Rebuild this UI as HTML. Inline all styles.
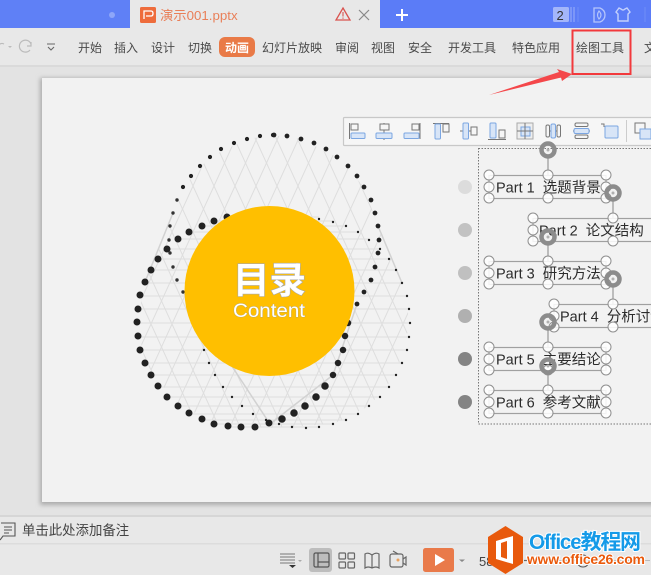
<!DOCTYPE html>
<html><head><meta charset="utf-8"><style>
html,body{margin:0;padding:0;background:#e8e8e8}
body{width:651px;height:575px;overflow:hidden;position:relative;font-family:"Liberation Sans","Noto Sans CJK SC",sans-serif}
svg{position:absolute;left:0;top:0}
text{font-family:"Liberation Sans","Noto Sans CJK SC",sans-serif}
.m{font-size:12px;fill:#4a4a4a}
.p{font-size:14.5px;fill:#2c2c2c}
</style></head><body>
<svg width="651" height="575" viewBox="0 0 651 575">
<defs>
<pattern id="h" patternUnits="userSpaceOnUse" width="21" height="46" x="4" y="2">
<path d="M0 0L21 46M21 0L0 46" stroke="#dedede" stroke-width="1" fill="none"/>
</pattern>
<filter id="b"><feGaussianBlur stdDeviation="2.5"/></filter>
</defs>
<!-- backgrounds -->
<rect width="651" height="575" fill="#e8e8e8"/>
<rect y="66" width="651" height="450" fill="#e3e3e3"/>
<rect y="65" width="651" height="2" fill="#dadada"/>
<rect x="40" y="78" width="640" height="427" fill="#aaa" filter="url(#b)"/>
<rect x="42" y="78" width="620" height="424" fill="#f2f2f2"/>
<rect y="515" width="651" height="2" fill="#d6d6d6"/>
<rect y="517" width="651" height="58" fill="#e8e8e8"/>
<rect y="543" width="651" height="1.5" fill="#dcdcdc"/>
<!-- tab bar -->
<rect width="130" height="28" fill="#5f80f6"/>
<rect x="380" width="271" height="28" fill="#5b7cf7"/>
<circle cx="112" cy="15" r="3" fill="#8ea6f8"/>
<rect x="140" y="7" width="16" height="16" rx="1.5" fill="#ee6c3c"/>
<path d="M144 19V11H151Q153 11 153 13.5Q153 16 151 16H146" stroke="#fff" stroke-width="1.3" fill="none"/>
<text x="160" y="20" font-size="13.3" fill="#e97f58">演示001.pptx</text>
<path d="M343 8L350 20H336Z" fill="none" stroke="#d9534f" stroke-width="1.3"/>
<path d="M343 12V16.5M343 17.5V18.8" stroke="#d9534f" stroke-width="1.1"/>
<path d="M359 10L369 20M369 10L359 20" stroke="#888" stroke-width="1.2"/>
<path d="M402 9V21M396 15H408" stroke="#fff" stroke-width="2"/>
<rect x="553" y="7" width="16" height="15" rx="1.5" fill="#a3b6fa"/>
<text x="556.5" y="20" font-size="13" fill="#333">2</text>
<path d="M571 7V22M574 7V22" stroke="#93a9f9" stroke-width="1.2"/>
<path d="M578 7V22M645 7V22" stroke="#6f8ef7" stroke-width="1"/>
<path d="M594 8H600Q605 10 605 15Q605 20 600 22H594Z" fill="none" stroke="#b6c6fb" stroke-width="1.3"/>
<path d="M599 11Q603 15 599 19Q596 15 599 11Z" fill="none" stroke="#b6c6fb" stroke-width="1.1"/>
<path d="M619 8L621 9Q623 11 625 9L627 8L630 12L628 14V21H618V14L616 12Z" fill="none" stroke="#c4d1fc" stroke-width="1.4"/>
<!-- menu -->
<path d="M-2 47Q0 42 4 44" stroke="#bbb" fill="none" stroke-width="1.2"/>
<path d="M8 46H12L10 48Z" fill="#bbb"/>
<path d="M31 44A6 6 0 1 0 30 50M31 42V46H27" stroke="#bbb" fill="none" stroke-width="1.2"/>
<path d="M47 44H55M48 47L51 50L54 47" stroke="#666" fill="none" stroke-width="1.1"/>
<text class="m" x="78" y="52">开始</text>
<text class="m" x="114" y="52">插入</text>
<text class="m" x="151" y="52">设计</text>
<text class="m" x="188" y="52">切换</text>
<rect x="219" y="37" width="36" height="20" rx="6" fill="#e97a47"/>
<text class="m" x="225" y="52" style="fill:#fff;font-weight:700">动画</text>
<text class="m" x="262" y="52">幻灯片放映</text>
<text class="m" x="335" y="52">审阅</text>
<text class="m" x="371" y="52">视图</text>
<text class="m" x="408" y="52">安全</text>
<text class="m" x="448" y="52">开发工具</text>
<text class="m" x="512" y="52">特色应用</text>
<text class="m" x="576" y="52">绘图工具</text>
<text class="m" x="644" y="52">文</text>
<rect x="572.5" y="30.5" width="58" height="43.5" fill="none" stroke="#f2393c" stroke-width="2"/>
<path d="M489 95L559 72L557 69L572 74L562 81L561 77.5Z" fill="#f4474a"/>
<!-- mesh -->
<path fill="url(#h)" d="M273 135L301 139L337 157L364 187L378 226L402 283L410 323L396 375L369 406L333 424L270 428L228 426L178 406L145 363L137 322L145 282L173 213L183 187L210 157L247 139Z"/>
<path stroke="#dedede" stroke-width="1" fill="none" d="M227 217H319M214 221H333M202 226H346M189 232H358M178 239H369M167 249H380M158 259H389M151 270H396M145 283H402M140 296H407M138 309H409M137 323H410M138 337H409M140 350H407M145 363H402M151 375H396M158 387H389M167 397H380M178 406H369M189 414H358M202 420H346M214 424H333M228 427H319"/>
<path stroke="#d2d2d2" stroke-width="1.5" fill="none" d="M173 213L145 282M378 226L402 283M183 292L270 424M357 304L333 375L270 424"/>
<!-- dots -->
<g fill="none" stroke="#222" stroke-linecap="round">
<path stroke-width="4.2" d="M273 135h0M260 136h0M247 139h0M234 143h0M221 149h0M210 157h0M200 166h0M191 176h0M183 187h0"/>
<path stroke-width="3.4" stroke="#333" d="M177 200h0M173 213h0M170 226h0M169 240h0M170 253h0M173 267h0M177 280h0M183 292h0"/>
<path stroke-width="4.8" d="M274 135h0M287 136h0M301 139h0M314 143h0M326 149h0M337 157h0M348 166h0M357 176h0M364 187h0M371 200h0M375 213h0M378 226h0M379 240h0M378 253h0M375 267h0M371 280h0M364 292h0M357 304h0"/>
<path stroke-width="7" d="M227 217h0M214 221h0M202 226h0M189 232h0M178 239h0M167 249h0M158 259h0M151 270h0M145 282h0M140 295h0M138 309h0M137 322h0M138 336h0M140 350h0M145 363h0M151 375h0M158 386h0M167 397h0M178 406h0M189 413h0M202 419h0M214 424h0M228 426h0M241 427h0M255 427h0M269 423h0"/>
<path stroke-width="6.5" d="M348 323h0M345 336h0M343 350h0M338 363h0M333 375h0"/>
<path stroke-width="7.5" d="M325 386h0M316 397h0M305 406h0M294 413h0M282 419h0"/>
<path stroke-width="2.4" d="M319 219h0M333 222h0M346 226h0M358 232h0M369 240h0M380 249h0M389 259h0M396 270h0M402 283h0M407 296h0M409 309h0M410 323h0M409 337h0M407 350h0M402 363h0M396 375h0M389 387h0M380 397h0M369 406h0M358 414h0M346 420h0M333 424h0M319 427h0M306 428h0M292 427h0M279 424h0M204 350h0M209 363h0M215 375h0M223 387h0M232 397h0M242 406h0M253 414h0M266 420h0"/>
</g>
<!-- circle -->
<circle cx="269.5" cy="291" r="85" fill="#ffbf00"/>
<text x="233" y="293" font-size="36.5" font-weight="700" fill="#fff" stroke="#a8a8a8" stroke-width="1.2" paint-order="stroke">目录</text>
<text x="233" y="317" font-size="19.5" fill="#fff" stroke="#b0a070" stroke-width=".7" paint-order="stroke" textLength="72" lengthAdjust="spacingAndGlyphs">Content</text>
<!-- floating toolbar -->
<rect x="343.5" y="117.5" width="320" height="28" rx="1" fill="#f6f6f6" stroke="#c8c8c8" stroke-width="1.2"/>
<g fill="#f6f6f6" stroke="#777" stroke-width="1">
<path d="M349.5 123V139M384 123V140M420 123V139M433 123.5H449M460 131H477M488 139.5H506M546 131H561M573 131H590" fill="none"/>
<rect x="351" y="124" width="7" height="6"/><rect x="380" y="124" width="9" height="6"/><rect x="412" y="124" width="7" height="6"/>
<rect x="443" y="124" width="6" height="8"/><rect x="471" y="127" width="6" height="8"/><rect x="499" y="130" width="6" height="8"/>
<rect x="517" y="123" width="16" height="16" fill="#eee" stroke="#aaa"/>
<rect x="546" y="125" width="3.5" height="12" rx="1.5"/><rect x="557" y="125" width="3.5" height="12" rx="1.5"/>
<rect x="575" y="123" width="13" height="3.5" rx="1.5"/><rect x="575" y="135" width="13" height="3.5" rx="1.5"/>
<rect x="635" y="123" width="10" height="10" fill="none"/>
<path d="M626.5 120V142" stroke="#ccc" fill="none"/>
</g>
<g fill="#d8e5f7" stroke="#7ba6e2" stroke-width="1">
<rect x="351" y="133" width="14" height="5.5" rx="1"/><rect x="376" y="133" width="16" height="5.5" rx="1"/><rect x="404" y="133" width="15" height="5.5" rx="1"/>
<rect x="435" y="124" width="5.5" height="15" rx="1"/><rect x="463" y="123" width="5.5" height="16" rx="1"/><rect x="490" y="123" width="6" height="15" rx="1"/>
<rect x="521" y="127" width="9" height="9"/><rect x="551" y="124" width="4.5" height="14" rx="1.5"/><rect x="574" y="128.5" width="15" height="5" rx="1.5"/>
<rect x="605" y="126" width="13" height="12" rx="1"/><rect x="640" y="129" width="11" height="10"/>
</g>
<path d="M517 131H533M525 123V139" stroke="#777" stroke-width="1"/>
<path d="M601 124H604V127" stroke="#777" fill="none"/>
<!-- row markers -->
<circle cx="465" cy="187" r="7" fill="#dcdcdc"/><circle cx="465" cy="230" r="7" fill="#c2c2c2"/><circle cx="465" cy="273" r="7" fill="#c0c0c0"/><circle cx="465" cy="316" r="7" fill="#b0b0b0"/><circle cx="465" cy="359" r="7" fill="#848484"/><circle cx="465" cy="402" r="7" fill="#848484"/>
<!-- selection -->
<rect x="478.5" y="148.5" width="190" height="275.5" fill="none" stroke="#777" stroke-width="1" stroke-dasharray="1.5 1.5"/>
<path d="M548 158V175M613 201V218M548 244V261M613 287V304M548 330V347M548 373V390" stroke="#999" stroke-width="1.2"/>
<g fill="#f2f2f2" stroke="#a0a0a0" stroke-width="1.2">
<rect x="489" y="175.5" width="117" height="23"/><rect x="533" y="218.5" width="160" height="23"/><rect x="489" y="261.5" width="117" height="23"/><rect x="554" y="304.5" width="118" height="23"/><rect x="489" y="347.5" width="117" height="23"/><rect x="489" y="390.5" width="117" height="23"/>
</g>
<g fill="#2c2c2c">
<text class="p" x="496" y="192.5">Part 1&#160;&#160;选题背景</text>
<text class="p" x="539" y="235.5">Part 2&#160;&#160;论文结构</text>
<text class="p" x="496" y="278.5">Part 3&#160;&#160;研究方法</text>
<text class="p" x="560" y="321.5">Part 4&#160;&#160;分析讨论</text>
<text class="p" x="496" y="364.5">Part 5&#160;&#160;主要结论</text>
<text class="p" x="496" y="407.5">Part 6&#160;&#160;参考文献</text>
</g>
<g fill="#fff" fill-opacity=".85" stroke="#8f8f8f" stroke-width="1">
<circle cx="489" cy="175" r="5"/><circle cx="548" cy="175" r="5"/><circle cx="606" cy="175" r="5"/><circle cx="489" cy="187" r="5"/><circle cx="606" cy="187" r="5"/><circle cx="489" cy="198" r="5"/><circle cx="548" cy="198" r="5"/><circle cx="606" cy="198" r="5"/>
<circle cx="533" cy="218" r="5"/><circle cx="613" cy="218" r="5"/><circle cx="533" cy="230" r="5"/><circle cx="533" cy="241" r="5"/><circle cx="613" cy="241" r="5"/>
<circle cx="489" cy="261" r="5"/><circle cx="548" cy="261" r="5"/><circle cx="606" cy="261" r="5"/><circle cx="489" cy="273" r="5"/><circle cx="606" cy="273" r="5"/><circle cx="489" cy="284" r="5"/><circle cx="548" cy="284" r="5"/><circle cx="606" cy="284" r="5"/>
<circle cx="554" cy="304" r="5"/><circle cx="613" cy="304" r="5"/><circle cx="554" cy="316" r="5"/><circle cx="554" cy="327" r="5"/><circle cx="613" cy="327" r="5"/>
<circle cx="489" cy="347" r="5"/><circle cx="548" cy="347" r="5"/><circle cx="606" cy="347" r="5"/><circle cx="489" cy="359" r="5"/><circle cx="606" cy="359" r="5"/><circle cx="489" cy="370" r="5"/><circle cx="548" cy="370" r="5"/><circle cx="606" cy="370" r="5"/>
<circle cx="489" cy="390" r="5"/><circle cx="548" cy="390" r="5"/><circle cx="606" cy="390" r="5"/><circle cx="489" cy="402" r="5"/><circle cx="606" cy="402" r="5"/><circle cx="489" cy="413" r="5"/><circle cx="548" cy="413" r="5"/><circle cx="606" cy="413" r="5"/>
</g>
<g fill="none" stroke="#8c8c8c" stroke-width="4.5">
<circle cx="548" cy="150" r="6.5"/><circle cx="613" cy="193" r="6.5"/><circle cx="548" cy="237" r="6.5"/><circle cx="613" cy="279" r="6.5"/><circle cx="548" cy="322" r="6.5"/><circle cx="548" cy="366" r="6.5"/>
</g>
<g fill="#b0b0b0">
<circle cx="548" cy="150" r="1.5"/><circle cx="613" cy="193" r="1.5"/><circle cx="548" cy="237" r="1.5"/><circle cx="613" cy="279" r="1.5"/><circle cx="548" cy="322" r="1.5"/><circle cx="548" cy="366" r="1.5"/>
</g>
<!-- notes -->
<path d="M1 523H15V536H3L0 540" fill="none" stroke="#555" stroke-width="1.1"/>
<path d="M4 527H12M4 530H12M4 533H9" stroke="#555" stroke-width="1"/>
<text x="22" y="535" font-size="13.4" fill="#444">单击此处添加备注</text>
<!-- status -->
<path d="M280 554H295M280 557H295M280 560H295M280 563H295" stroke="#777" stroke-width="1"/>
<path d="M289 565H296L292.5 568Z" fill="#333"/>
<path d="M298 560H302L300 562Z" fill="#aaa"/>
<rect x="309" y="548" width="23" height="24" rx="3" fill="#bdbdbd"/>
<rect x="314" y="553" width="15" height="14" rx="1.5" fill="none" stroke="#555" stroke-width="1.2"/>
<path d="M318 553V567M318 562H329" stroke="#555" stroke-width="1.2"/>
<g fill="none" stroke="#666" stroke-width="1.2">
<rect x="339" y="553" width="6.5" height="6" rx="1"/><rect x="348" y="553" width="6.5" height="6" rx="1"/><rect x="339" y="562" width="6.5" height="6" rx="1"/><rect x="348" y="562" width="6.5" height="6" rx="1"/>
<path d="M372 555Q368 552 365 554V568Q368 566 372 568Q376 566 379 568V554Q376 552 372 555V568"/>
<rect x="390" y="554" width="13" height="13" rx="2"/><path d="M403 559L406 557V565L403 563M393 551L398 554"/>
</g>
<circle cx="398" cy="560" r="1.5" fill="#e9a25f"/>
<rect x="423" y="548" width="31" height="24" rx="2.5" fill="#e97a4a"/>
<path d="M435 554L445 560L435 566Z" fill="#fff"/>
<path d="M459 559.5H465L462 562Z" fill="#888"/>
<text x="479" y="566" font-size="13" fill="#444">58%</text>
<path d="M524 560.5H531" stroke="#666" stroke-width="1.2"/>
<path d="M531 560.5H650" stroke="#bbb" stroke-width="1"/>
<circle cx="583" cy="561" r="6" fill="#e8e8e8" stroke="#555" stroke-width="1.1"/>
<!-- logo -->
<path d="M505.5 526L523 537V563L505.5 574L488 563V537Z" fill="#e8590c"/>
<path d="M496 541L513 536V564L496 559Z" fill="#fff"/>
<path d="M501 543L507 541V559L501 557Z" fill="#e8590c"/>
<text x="529" y="549" font-size="21" font-weight="700" fill="#149ae8" stroke="#fff" stroke-width="2" paint-order="stroke" textLength="112">Office教程网</text>
<text x="527" y="564" font-size="14" font-weight="700" fill="#ea5a0c" stroke="#fff" stroke-width="2" paint-order="stroke" textLength="118">www.office26.com</text>
</svg>
</body></html>
